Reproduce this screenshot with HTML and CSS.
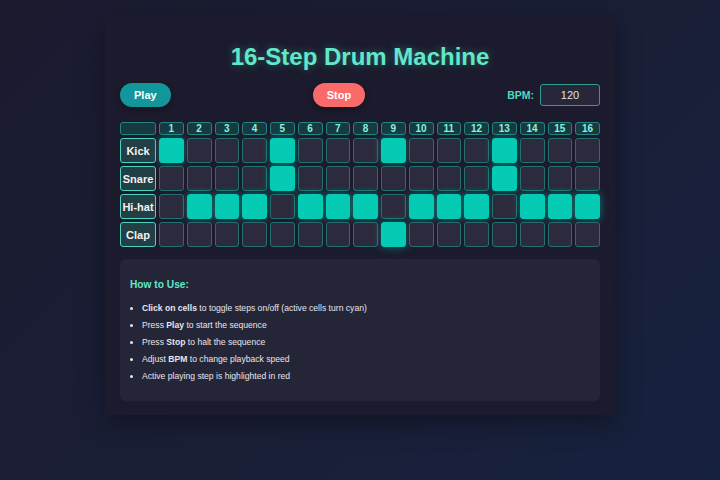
FILE: index.html
```html
<!DOCTYPE html>
<html lang="en">
<head>
    <meta charset="UTF-8">
    <meta name="viewport" content="width=device-width, initial-scale=1.0">
    <title>16-Step Drum Machine</title>
    <link rel="stylesheet" href="styles.css">
</head>
<body>

<div class="machine">
    <h1>16-Step Drum Machine</h1>

    <div class="controls">
        <button class="btn play" onclick="play()">Play</button>
        <button class="btn stop" onclick="stop()">Stop</button>
        <div class="bpm">
            <label for="bpm">BPM:</label>
            <input type="number" id="bpm" value="120">
        </div>
    </div>

    <div id="grid" class="grid"></div>

    <div class="info">
        <h3>How to Use:</h3>
        <ul>
            <li><b>Click on cells</b> to toggle steps on/off (active cells turn cyan)</li>
            <li>Press <b>Play</b> to start the sequence</li>
            <li>Press <b>Stop</b> to halt the sequence</li>
            <li>Adjust <b>BPM</b> to change playback speed</li>
            <li>Active playing step is highlighted in red</li>
        </ul>
    </div>
</div>

<script>
    // patrones iniciales
    const tracks = [
        { name: 'Kick', steps: [1, 5, 9, 13] },
        { name: 'Snare', steps: [5, 13] },
        { name: 'Hi-hat', steps: [2, 3, 4, 6, 7, 8, 10, 11, 12, 14, 15, 16] },
        { name: 'Clap', steps: [9] }
    ];

    function renderGrid() {
        const grid = document.getElementById('grid');
        grid.innerHTML = '<div class="head blank"></div>';
        for (let i = 1; i <= 16; i++) {
            grid.innerHTML += `<div class="head">${i}</div>`;
        }
        tracks.forEach((track) => {
            grid.innerHTML += `<div class="label">${track.name}</div>`;
            for (let i = 1; i <= 16; i++) {
                const on = track.steps.includes(i) ? ' active' : '';
                grid.innerHTML += `<div class="cell${on}" onclick="this.classList.toggle('active')"></div>`;
            }
        });
    }

    function play() {}
    function stop() {}

    renderGrid();
</script>

</body>
</html>
```

FILE: styles.css
```css
body {
    margin: 0;
    min-height: 100vh;
    font-family: "Liberation Sans", Arial, sans-serif;
    background: linear-gradient(135deg, #1b1b2f 0%, #1a1f38 60%, #16213e 100%);
    color: #e8e8f0;
}

.machine {
    width: 480px;
    margin: 15px auto 0;
    padding: 12px 15px 14px;
    background-color: #1b1b2d;
    box-shadow: 0 8px 24px rgba(0, 0, 0, 0.35);
}

h1 {
    margin: 16px 0 12px;
    text-align: center;
    font-size: 24px;
    color: #5fe8c9;
    text-shadow: 0 0 8px rgba(95, 232, 201, 0.35);
}

.controls {
    display: flex;
    justify-content: space-between;
    align-items: center;
    margin-bottom: 15px;
}

.btn {
    font-family: inherit;
    font-size: 11px;
    font-weight: bold;
    color: white;
    border: none;
    border-radius: 12px;
    padding: 6px 14px;
    height: 24px;
    cursor: pointer;
    box-shadow: 0 2px 6px rgba(0, 0, 0, 0.35);
}

.play {
    background-color: #13969a;
}

.stop {
    background-color: #fb6a6a;
}

.bpm {
    display: flex;
    align-items: center;
    gap: 6px;
}

.bpm label {
    font-size: 10.5px;
    font-weight: bold;
    color: #4fd8c0;
}

.bpm input {
    width: 60px;
    height: 22px;
    box-sizing: border-box;
    padding: 0;
    font-family: inherit;
    font-size: 11px;
    text-align: center;
    color: #e0e0ea;
    background-color: #272739;
    border: 1px solid #2a9d90;
    border-radius: 3px;
    -moz-appearance: textfield;
}

.bpm input::-webkit-inner-spin-button {
    -webkit-appearance: none;
}

.grid {
    display: grid;
    grid-template-columns: 36px repeat(16, 1fr);
    grid-template-rows: 13px repeat(4, 25px);
    gap: 3px;
}

.head {
    display: flex;
    align-items: center;
    justify-content: center;
    font-size: 10px;
    font-weight: bold;
    color: #86f2dc;
    background-color: #173a42;
    border: 1px solid #25837f;
    border-radius: 3px;
}

.label {
    display: flex;
    align-items: center;
    justify-content: center;
    font-size: 11px;
    font-weight: bold;
    color: #f2f2f2;
    background-color: #223f46;
    border: 1.5px solid #4fd2be;
    border-radius: 3px;
}

.cell {
    background-color: #2c2a3d;
    border: 1px solid #23706f;
    border-radius: 3px;
    cursor: pointer;
}

.cell.active {
    background-color: #06cbb4;
    border-color: #06cbb4;
    box-shadow: 0 0 8px rgba(6, 203, 180, 0.5);
}

.info {
    margin-top: 12px;
    padding: 12px 10px 13px;
    background-color: #252538;
    border-radius: 6px;
}

.info h3 {
    margin: 8px 0 13px;
    font-size: 10.2px;
    color: #5fe8c9;
}

.info ul {
    margin: 0;
    padding-left: 12px;
}

.info li {
    font-size: 8.6px;
    color: #e6e6ee;
    line-height: 11px;
    margin-bottom: 6px;
}
```
